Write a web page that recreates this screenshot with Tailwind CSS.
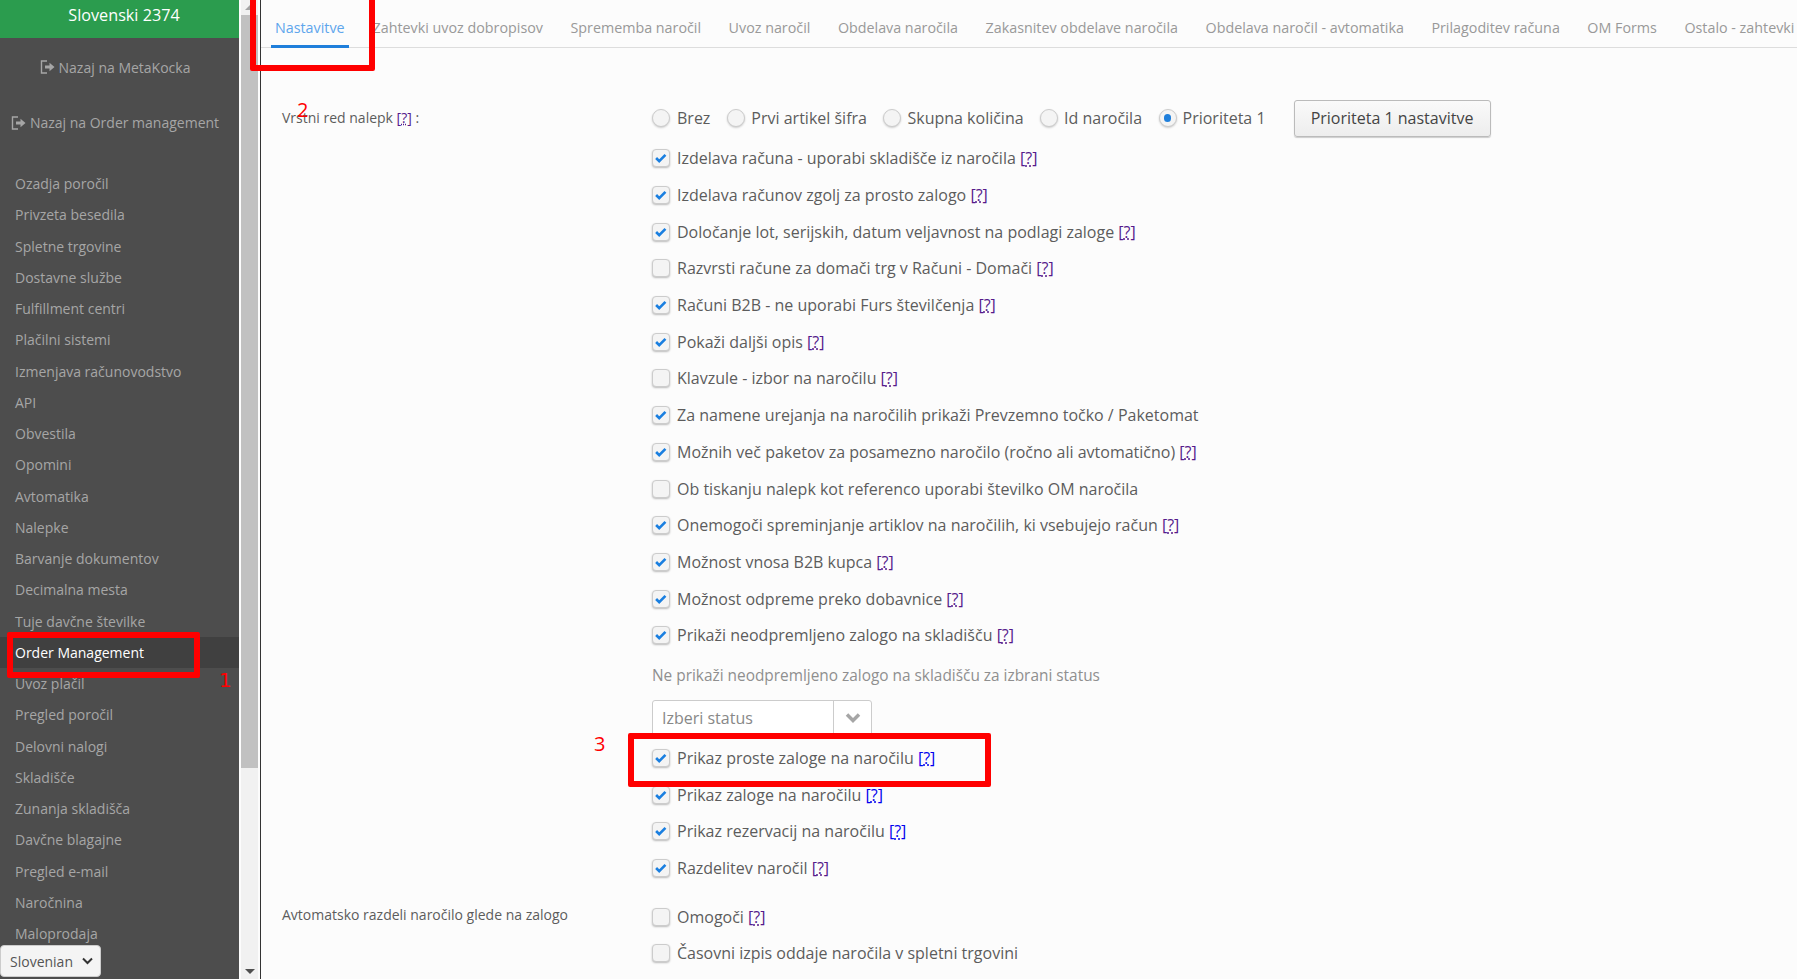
<!DOCTYPE html>
<html lang="sl">
<head>
    <meta charset="UTF-8" />
    <meta name="viewport" content="width=device-width, initial-scale=1.0" />
    <script src="https://cdn.jsdelivr.net/npm/@tailwindcss/browser@4"></script>
    <title>Order Management</title>
</head>
<body class="h-screen overflow-hidden flex bg-[#fcfcfc] font-['Open_Sans',sans-serif] text-[#5c5c5c]">

    <!-- Stranski meni -->
    <aside class="w-[239px] h-full shrink-0 bg-[#4d4d4d] overflow-hidden text-[14px] text-[#a6a6a6]">
        <div class="h-[38px] bg-[#2b9c4e] text-white text-[16.2px] text-center pt-[2px] pl-[9px] leading-[26px]">Slovenski 2374</div>

        <a class="flex items-center justify-center gap-[4px] h-[56px] pr-[9px] pt-[2px]">
            <svg class="w-[15px] h-[14px]" viewBox="0 0 15 14" fill="none"><path d="M7 1H1.500v12H7" stroke="#a6a6a6" stroke-width="1.4"/><path d="M5 5.500h4.500V2.800L14.500 7l-5 4.200V8.500H5z" fill="#a6a6a6"/></svg>
            <span>Nazaj na MetaKocka</span>
        </a>
        <a class="flex items-center justify-center gap-[4px] h-[56px] pr-[9px] pt-[1px]">
            <svg class="w-[15px] h-[14px]" viewBox="0 0 15 14" fill="none"><path d="M7 1H1.500v12H7" stroke="#a6a6a6" stroke-width="1.4"/><path d="M5 5.500h4.500V2.800L14.500 7l-5 4.200V8.500H5z" fill="#a6a6a6"/></svg>
            <span>Nazaj na Order management</span>
        </a>

        <nav class="mt-[18px] [&>a]:flex [&>a]:items-center [&>a]:h-[31.25px] [&>a]:pl-[15px]">
            <a>Ozadja poročil</a>
            <a>Privzeta besedila</a>
            <a>Spletne trgovine</a>
            <a>Dostavne službe</a>
            <a>Fulfillment centri</a>
            <a>Plačilni sistemi</a>
            <a>Izmenjava računovodstvo</a>
            <a>API</a>
            <a>Obvestila</a>
            <a>Opomini</a>
            <a>Avtomatika</a>
            <a>Nalepke</a>
            <a>Barvanje dokumentov</a>
            <a>Decimalna mesta</a>
            <a>Tuje davčne številke</a>
            <a class="bg-[#404040] text-white font-medium">Order Management</a>
            <a>Uvoz plačil</a>
            <a>Pregled poročil</a>
            <a>Delovni nalogi</a>
            <a>Skladišče</a>
            <a>Zunanja skladišča</a>
            <a>Davčne blagajne</a>
            <a>Pregled e-mail</a>
            <a>Naročnina</a>
            <a>Maloprodaja</a>
        </nav>
    </aside>

    <!-- Drsnik menija -->
    <div class="w-[17px] h-full ml-[2px] shrink-0 bg-[#f1f1f1] flex flex-col">
        <div class="h-[15px] flex items-center justify-center"><div class="w-0 h-0 border-x-[5px] border-x-transparent border-b-[5px] border-b-[#a3a3a3]"></div></div>
        <div class="h-[753px] bg-[#c1c1c1]"></div>
        <div class="flex-1 flex items-end justify-center pb-[5px]"><div class="w-0 h-0 border-x-[5px] border-x-transparent border-t-[5px] border-t-[#505050]"></div></div>
    </div>

    <main class="flex-1 min-w-0 ml-[2px] h-full border-l border-[#333] overflow-hidden">

        <!-- Zavihki -->
        <div class="h-[48px] border-b border-[#ddd] flex items-start pl-[10px] text-[14.3px] text-[#999] whitespace-nowrap">
            <a class="h-[48px] px-[4px] pt-[17px] border-b-[3px] border-[#1f7fdb] text-[#5ea6ec] mr-[24px]">Nastavitve</a>
            <a class="pt-[17px] mr-[27.5px]">Zahtevki uvoz dobropisov</a>
            <a class="pt-[17px] mr-[27.5px]">Sprememba naročil</a>
            <a class="pt-[17px] mr-[27.5px]">Uvoz naročil</a>
            <a class="pt-[17px] mr-[27.5px]">Obdelava naročila</a>
            <a class="pt-[17px] mr-[27.5px]">Zakasnitev obdelave naročila</a>
            <a class="pt-[17px] mr-[27.5px]">Obdelava naročil - avtomatika</a>
            <a class="pt-[17px] mr-[27.5px]">Prilagoditev računa</a>
            <a class="pt-[17px] mr-[27.5px]">OM Forms</a>
            <a class="pt-[17px]">Ostalo - zahtevki</a>
        </div>

        <div class="pl-[21px] pt-[51px]">
            <div class="flex">
                <div class="w-[370px] shrink-0 text-[14px] leading-[38px]">Vrstni red nalepk <a class="text-[#551a8b]">[<span class="underline decoration-dotted">?</span>]</a> :</div>
                <div class="flex items-center h-[38px] text-[16px]">
                    <span class="w-[18px] h-[18px] rounded-full border border-[#ccc] bg-[#f4f4f4] shadow-[0_1px_2px_#ccc] mr-[7px]"></span><span class="mr-[17px]">Brez</span>
                    <span class="w-[18px] h-[18px] rounded-full border border-[#ccc] bg-[#f4f4f4] shadow-[0_1px_2px_#ccc] mr-[6px]"></span><span class="mr-[16.500px]">Prvi artikel šifra</span>
                    <span class="w-[18px] h-[18px] rounded-full border border-[#ccc] bg-[#f4f4f4] shadow-[0_1px_2px_#ccc] mr-[6px]"></span><span class="mr-[16.500px]">Skupna količina</span>
                    <span class="w-[18px] h-[18px] rounded-full border border-[#ccc] bg-[#f4f4f4] shadow-[0_1px_2px_#ccc] mr-[6px]"></span><span class="mr-[16.500px]">Id naročila</span>
                    <span class="w-[18px] h-[18px] rounded-full border border-[#ccc] bg-[#f4f4f4] shadow-[0_1px_2px_#ccc] mr-[6px] flex items-center justify-center"><span class="w-[7px] h-[8px] rounded-full bg-[#1f7fdb]"></span></span><span class="mr-[28px]">Prioriteta 1</span>
                    <button class="h-[37px] w-[197px] rounded-[3px] border border-[#bbb] bg-gradient-to-b from-[#fafafa] to-[#ededed] shadow-[0_1px_1px_#ccc] text-[#444]">Prioriteta 1 nastavitve</button>
                </div>
            </div>

            <div class="ml-[370px] mt-[3px] text-[16px] [&>div]:flex [&>div]:items-center [&>div]:h-[36.7px] [&_svg]:w-[18px] [&_svg]:h-[18px] [&_svg]:mr-[7px] [&_svg]:shrink-0 [&_svg]:rounded-[4px] [&_svg]:border [&_svg]:border-[#ccc] [&_svg]:bg-[#f4f4f4] [&_svg]:shadow-[0_1px_2px_#bbb]">
                <div><svg viewBox="0 0 18 18"><path d="M3.500 9l3.500 3.500 7-7" fill="none" stroke="#1a7fe0" stroke-width="3"/></svg>Izdelava računa - uporabi skladišče iz naročila&nbsp;<a class="text-[#551a8b]">[<span class="underline decoration-dotted">?</span>]</a></div>
                <div><svg viewBox="0 0 18 18"><path d="M3.500 9l3.500 3.500 7-7" fill="none" stroke="#1a7fe0" stroke-width="3"/></svg>Izdelava računov zgolj za prosto zalogo&nbsp;<a class="text-[#551a8b]">[<span class="underline decoration-dotted">?</span>]</a></div>
                <div><svg viewBox="0 0 18 18"><path d="M3.500 9l3.500 3.500 7-7" fill="none" stroke="#1a7fe0" stroke-width="3"/></svg>Določanje lot, serijskih, datum veljavnost na podlagi zaloge&nbsp;<a class="text-[#551a8b]">[<span class="underline decoration-dotted">?</span>]</a></div>
                <div><svg viewBox="0 0 18 18"></svg>Razvrsti račune za domači trg v Računi - Domači&nbsp;<a class="text-[#551a8b]">[<span class="underline decoration-dotted">?</span>]</a></div>
                <div><svg viewBox="0 0 18 18"><path d="M3.500 9l3.500 3.500 7-7" fill="none" stroke="#1a7fe0" stroke-width="3"/></svg>Računi B2B - ne uporabi Furs številčenja&nbsp;<a class="text-[#551a8b]">[<span class="underline decoration-dotted">?</span>]</a></div>
                <div><svg viewBox="0 0 18 18"><path d="M3.500 9l3.500 3.500 7-7" fill="none" stroke="#1a7fe0" stroke-width="3"/></svg>Pokaži daljši opis&nbsp;<a class="text-[#551a8b]">[<span class="underline decoration-dotted">?</span>]</a></div>
                <div><svg viewBox="0 0 18 18"></svg>Klavzule - izbor na naročilu&nbsp;<a class="text-[#551a8b]">[<span class="underline decoration-dotted">?</span>]</a></div>
                <div><svg viewBox="0 0 18 18"><path d="M3.500 9l3.500 3.500 7-7" fill="none" stroke="#1a7fe0" stroke-width="3"/></svg>Za namene urejanja na naročilih prikaži Prevzemno točko / Paketomat</div>
                <div><svg viewBox="0 0 18 18"><path d="M3.500 9l3.500 3.500 7-7" fill="none" stroke="#1a7fe0" stroke-width="3"/></svg>Možnih več paketov za posamezno naročilo (ročno ali avtomatično)&nbsp;<a class="text-[#551a8b]">[<span class="underline decoration-dotted">?</span>]</a></div>
                <div><svg viewBox="0 0 18 18"></svg>Ob tiskanju nalepk kot referenco uporabi številko OM naročila</div>
                <div><svg viewBox="0 0 18 18"><path d="M3.500 9l3.500 3.500 7-7" fill="none" stroke="#1a7fe0" stroke-width="3"/></svg>Onemogoči spreminjanje artiklov na naročilih, ki vsebujejo račun&nbsp;<a class="text-[#551a8b]">[<span class="underline decoration-dotted">?</span>]</a></div>
                <div><svg viewBox="0 0 18 18"><path d="M3.500 9l3.500 3.500 7-7" fill="none" stroke="#1a7fe0" stroke-width="3"/></svg>Možnost vnosa B2B kupca&nbsp;<a class="text-[#551a8b]">[<span class="underline decoration-dotted">?</span>]</a></div>
                <div><svg viewBox="0 0 18 18"><path d="M3.500 9l3.500 3.500 7-7" fill="none" stroke="#1a7fe0" stroke-width="3"/></svg>Možnost odpreme preko dobavnice&nbsp;<a class="text-[#551a8b]">[<span class="underline decoration-dotted">?</span>]</a></div>
                <div><svg viewBox="0 0 18 18"><path d="M3.500 9l3.500 3.500 7-7" fill="none" stroke="#1a7fe0" stroke-width="3"/></svg>Prikaži neodpremljeno zalogo na skladišču&nbsp;<a class="text-[#551a8b]">[<span class="underline decoration-dotted">?</span>]</a></div>

                <p class="h-[39px] leading-[43px] text-[15.4px] text-[#8f8f8f]">Ne prikaži neodpremljeno zalogo na skladišču za izbrani status</p>
                <section class="flex h-[36px] w-[220px] mt-[7px] mb-[4px] border border-[#ccc] rounded-[3px] bg-white text-[#888]">
                    <span class="flex-1 pl-[9px] leading-[35px]">Izberi status</span>
                    <span class="w-[38px] border-l border-[#ccc] flex items-center justify-center"><svg class="!w-[16px] !h-[11px] !m-0 !border-0 !bg-transparent !shadow-none !rounded-none" viewBox="0 0 16 11"><path d="M2 2.500l6 6 6-6" fill="none" stroke="#a6a6a6" stroke-width="3.500"/></svg></span>
                </section>

                <div><svg viewBox="0 0 18 18"><path d="M3.500 9l3.500 3.500 7-7" fill="none" stroke="#1a7fe0" stroke-width="3"/></svg>Prikaz proste zaloge na naročilu&nbsp;<a class="text-[#0000ee]">[<span class="underline decoration-dotted">?</span>]</a></div>
                <div><svg viewBox="0 0 18 18"><path d="M3.500 9l3.500 3.500 7-7" fill="none" stroke="#1a7fe0" stroke-width="3"/></svg>Prikaz zaloge na naročilu&nbsp;<a class="text-[#0000ee]">[<span class="underline decoration-dotted">?</span>]</a></div>
                <div><svg viewBox="0 0 18 18"><path d="M3.500 9l3.500 3.500 7-7" fill="none" stroke="#1a7fe0" stroke-width="3"/></svg>Prikaz rezervacij na naročilu&nbsp;<a class="text-[#0000ee]">[<span class="underline decoration-dotted">?</span>]</a></div>
                <div><svg viewBox="0 0 18 18"><path d="M3.500 9l3.500 3.500 7-7" fill="none" stroke="#1a7fe0" stroke-width="3"/></svg>Razdelitev naročil&nbsp;<a class="text-[#551a8b]">[<span class="underline decoration-dotted">?</span>]</a></div>
            </div>

            <div class="flex mt-[13px]">
                <div class="w-[370px] shrink-0 text-[14px] leading-[32px]">Avtomatsko razdeli naročilo glede na zalogo</div>
                <div class="text-[16px] [&>div]:flex [&>div]:items-center [&>div]:h-[36px] [&_svg]:w-[18px] [&_svg]:h-[18px] [&_svg]:mr-[7px] [&_svg]:rounded-[4px] [&_svg]:border [&_svg]:border-[#ccc] [&_svg]:bg-[#f4f4f4] [&_svg]:shadow-[0_1px_2px_#bbb]">
                    <div><svg viewBox="0 0 18 18"></svg>Omogoči&nbsp;<a class="text-[#551a8b]">[<span class="underline decoration-dotted">?</span>]</a></div>
                    <div><svg viewBox="0 0 18 18"></svg>Časovni izpis oddaje naročila v spletni trgovini</div>
                </div>
            </div>
        </div>
    </main>

    <!-- Izbira jezika -->
    <div class="absolute left-0 top-[945px] w-[101px] h-[32px] flex items-center justify-between pl-[9px] pr-[7px] bg-[#f4f4f4] border border-[#ccc] rounded-[4px] text-[14px] text-[#555]">
        <span>Slovenian</span>
        <svg class="w-[11px] h-[8px]" viewBox="0 0 11 8"><path d="M1 1.500l4.500 4.500L10 1.500" fill="none" stroke="#333" stroke-width="2"/></svg>
    </div>

    <!-- Rdece oznake na posnetku -->
    <div class="absolute left-[7px] top-[632px] w-[193px] h-[46px] border-[6px] border-[#ff0000] rounded-[2px]"></div>
    <div class="absolute left-[250px] top-[-6px] w-[125px] h-[77px] border-[6px] border-[#ff0000] rounded-[2px]"></div>
    <div class="absolute left-[628px] top-[733px] w-[363px] h-[54px] border-[6px] border-[#ff0000] rounded-[2px]"></div>
    <span class="absolute left-[219px] top-[665px] text-[20px] leading-[30px] text-[#ff0000] font-['DejaVu_Sans',sans-serif]">1</span>
    <span class="absolute left-[297px] top-[95px] text-[20px] leading-[30px] text-[#ff0000] font-['Open_Sans',sans-serif]">2</span>
    <span class="absolute left-[594px] top-[729px] text-[20px] leading-[30px] text-[#ff0000] font-['Open_Sans',sans-serif]">3</span>

</body>
</html>
